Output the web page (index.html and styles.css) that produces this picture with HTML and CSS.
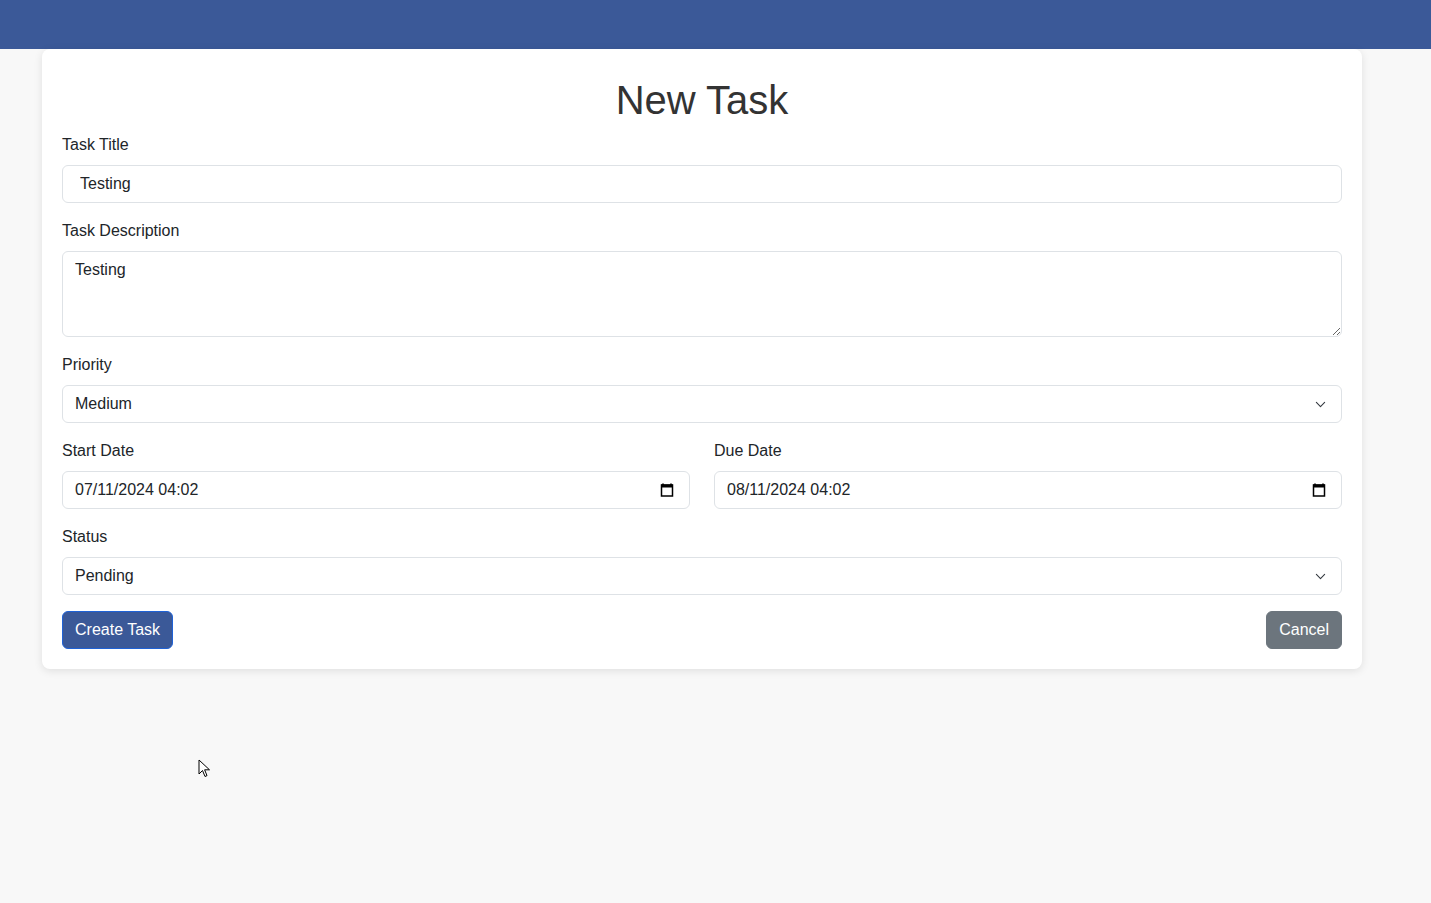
FILE: index.html
```html
<!DOCTYPE html>
<html lang="en">
<head>
<meta charset="utf-8">
<title>New Task</title>
<link rel="stylesheet" href="styles.css">
</head>
<body>
<header class="topbar"></header>
<main class="page">
  <form class="card">
    <h1 class="card-title">New Task</h1>
    <div class="field">
      <label class="label" for="title">Task Title</label>
      <input class="control control-title" id="title" type="text" value="Testing">
    </div>
    <div class="field">
      <label class="label" for="desc">Task Description</label>
      <textarea class="control control-area" id="desc" rows="3">Testing</textarea>
    </div>
    <div class="field">
      <label class="label" for="priority">Priority</label>
      <select class="control control-select" id="priority">
        <option>Low</option>
        <option selected>Medium</option>
        <option>High</option>
      </select>
    </div>
    <div class="field row">
      <div class="col">
        <label class="label" for="start">Start Date</label>
        <div class="control control-date">
          <input class="date-text" id="start" type="text" value="07/11/2024 04:02">
          <svg class="cal" width="14" height="14" viewBox="0 0 14 14"><path d="M3 0.5v2M11 0.5v2" stroke="#000" stroke-width="1.6"/><rect x="1.5" y="2" width="11" height="11" fill="none" stroke="#000" stroke-width="1.5"/><rect x="1" y="1.5" width="12" height="3" fill="#000"/></svg>
        </div>
      </div>
      <div class="col">
        <label class="label" for="due">Due Date</label>
        <div class="control control-date">
          <input class="date-text" id="due" type="text" value="08/11/2024 04:02">
          <svg class="cal" width="14" height="14" viewBox="0 0 14 14"><path d="M3 0.5v2M11 0.5v2" stroke="#000" stroke-width="1.6"/><rect x="1.5" y="2" width="11" height="11" fill="none" stroke="#000" stroke-width="1.5"/><rect x="1" y="1.5" width="12" height="3" fill="#000"/></svg>
        </div>
      </div>
    </div>
    <div class="field">
      <label class="label" for="status">Status</label>
      <select class="control control-select" id="status">
        <option selected>Pending</option>
        <option>In Progress</option>
        <option>Completed</option>
      </select>
    </div>
    <div class="actions">
      <button class="btn btn-primary" type="button">Create Task</button>
      <button class="btn btn-secondary" type="button">Cancel</button>
    </div>
  </form>
</main>
<svg class="cursor" width="14" height="20" viewBox="0 0 14 20"><path d="M1 1 L1 15 L4.5 11.5 L7 17.5 L9 16.6 L6.6 10.8 L11.5 10.8 Z" fill="#fff" stroke="#000" stroke-width="1" stroke-linejoin="round"/></svg>
</body>
</html>
```

FILE: styles.css
```css
* { box-sizing: border-box; }

html, body {
  margin: 0;
  padding: 0;
}

body {
  background: #f8f8f8;
  font-family: "Liberation Sans", Arial, sans-serif;
  font-size: 16px;
  line-height: 1.5;
  color: #212529;
  min-height: 903px;
  position: relative;
}

.topbar {
  height: 49px;
  background: #3b5998;
}

.page {
  padding: 0 69px 0 42px;
}

.card {
  background: #fff;
  border-radius: 8px;
  box-shadow: 0 2px 8px rgba(0, 0, 0, 0.1);
  padding: 20px;
}

.card-title {
  margin: 0;
  text-align: center;
  font-size: 40px;
  font-weight: 400;
  line-height: 63px;
  height: 64px;
  color: #333;
}

.field {
  margin-bottom: 16px;
}

.label {
  display: block;
  height: 24px;
  line-height: 24px;
  margin: 0 0 8px;
}

.control {
  display: block;
  width: 100%;
  height: 38px;
  padding: 6px 12px;
  font-family: "Liberation Sans", Arial, sans-serif;
  font-size: 16px;
  line-height: 24px;
  color: #212529;
  background: #fff;
  border: 1px solid #dee2e6;
  border-radius: 6px;
  outline: none;
}

.control-title {
  padding-left: 17px;
}

.control-area {
  height: 86px;
  resize: vertical;
}

.control-select {
  appearance: none;
  -webkit-appearance: none;
  padding-right: 36px;
  background-image: url("data:image/svg+xml,%3csvg xmlns='http://www.w3.org/2000/svg' viewBox='0 0 16 16'%3e%3cpath fill='none' stroke='%23343a40' stroke-linecap='round' stroke-linejoin='round' stroke-width='1.6' d='m2 5 6 6 6-6'/%3e%3c/svg%3e");
  background-repeat: no-repeat;
  background-position: right 13px center;
  background-size: 15px 11px;
}

.row {
  display: grid;
  grid-template-columns: 1fr 1fr;
  column-gap: 24px;
}

.control-date {
  display: flex;
  align-items: center;
  gap: 8px;
  padding-right: 15px;
}

.date-text {
  flex: 1;
  min-width: 0;
  border: 0;
  padding: 0;
  margin: 0;
  font: inherit;
  color: #212529;
  background: transparent;
  outline: none;
}

.cal {
  display: block;
  flex: none;
}

.actions {
  display: flex;
  justify-content: space-between;
  align-items: center;
}

.btn {
  height: 38px;
  padding: 6px 12px;
  font-family: "Liberation Sans", Arial, sans-serif;
  font-size: 16px;
  line-height: 24px;
  border-radius: 6px;
  color: #fff;
  cursor: pointer;
}

.btn-primary {
  background: #3b5998;
  border: 1px solid #1f62d6;
}

.btn-secondary {
  background: #6c757d;
  border: 1px solid #6c757d;
}

.cursor {
  position: absolute;
  left: 198px;
  top: 759px;
}
```
